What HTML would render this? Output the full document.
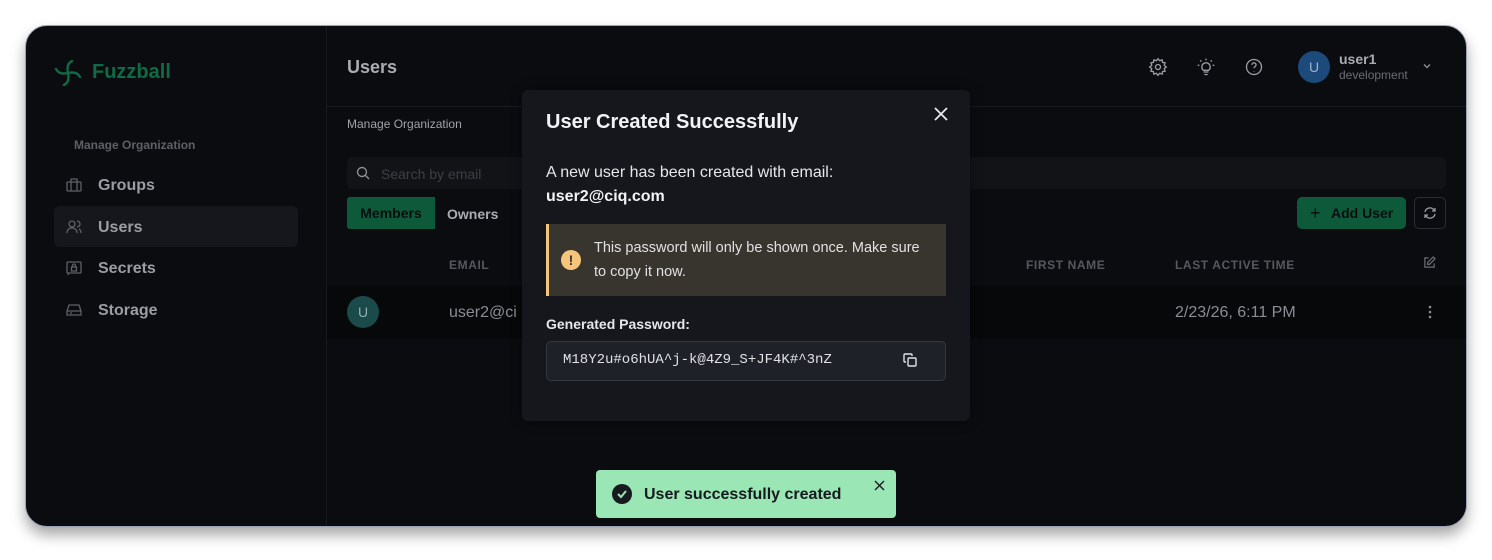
<!DOCTYPE html>
<html><head><meta charset="utf-8"><style>
*{box-sizing:border-box;margin:0;padding:0}
body{width:1492px;height:560px;background:#fff;font-family:"Liberation Sans",sans-serif;position:relative;overflow:hidden}
.win{position:absolute;left:25px;top:25px;width:1442px;height:502px;border-radius:22px;background:#0b0c10;border:1.5px solid #9aa3b5;box-shadow:0 8px 14px rgba(0,0,0,.35);overflow:hidden}
.abs{position:absolute}
.side{left:0;top:0;width:301px;height:100%;border-right:1px solid #181a1f}
.t{position:absolute;white-space:nowrap}
.nav{color:#9a9da3;font-size:16px;font-weight:bold}
.ic{stroke:#5c6067;fill:none;stroke-width:1.3}
</style></head><body>
<div class="win">
 <div class="abs side">
  <svg class="abs" style="left:27px;top:32px" width="30" height="30" viewBox="0 0 30 30" fill="none" stroke="#0f6a45" stroke-width="2.4" stroke-linecap="round">
   <path d="M15 15 Q13 6 19 3"/><path d="M15 15 Q24 13 27 19"/><path d="M15 15 Q17 24 11 27"/><path d="M15 15 Q6 17 3 11"/>
  </svg>
  <div class="t" style="left:66px;top:35px;font-size:20px;font-weight:bold;color:#0f6a45">Fuzzball</div>
  <div class="t" style="left:48px;top:112px;font-size:12px;font-weight:bold;color:#5d6066">Manage Organization</div>
  <div class="abs" style="left:28px;top:180px;width:244px;height:41px;border-radius:6px;background:#15171c"></div>
  <svg class="abs ic" style="left:40px;top:151px" width="16" height="16" viewBox="0 0 16 16"><rect x="1" y="5" width="14" height="9" rx="1"/><path d="M5 5V2h6v3M5 5v9M11 5v9"/></svg>
  <div class="t nav" style="left:72px;top:151px">Groups</div>
  <svg class="abs ic" style="left:40px;top:193px" width="16" height="16" viewBox="0 0 16 16"><circle cx="6" cy="5" r="3"/><path d="M1 14c0-3 2-5 5-5s5 2 5 5M11 2a3 3 0 010 6M13 10c1.5.7 2 2 2 4"/></svg>
  <div class="t nav" style="left:72px;top:193px">Users</div>
  <svg class="abs ic" style="left:40px;top:234px" width="16" height="16" viewBox="0 0 16 16"><rect x="1" y="2" width="14" height="11" rx="1"/><rect x="5.5" y="7" width="5" height="4"/><path d="M6.5 7V5.5a1.5 1.5 0 013 0V7M3 13l-1 2"/></svg>
  <div class="t nav" style="left:72px;top:234px">Secrets</div>
  <svg class="abs ic" style="left:40px;top:276px" width="16" height="16" viewBox="0 0 16 16"><path d="M1 9l2-6h10l2 6v4H1zM1 9h14M4 11h2"/></svg>
  <div class="t nav" style="left:72px;top:276px">Storage</div>
 </div>
 <div class="t" style="left:321px;top:31px;font-size:18px;font-weight:bold;color:#a9acb2">Users</div>
 <div class="abs" style="left:301px;top:80px;right:0;height:1px;background:#181a1f"></div>
 <svg class="abs" style="left:1122px;top:31px" width="20" height="20" viewBox="0 0 24 24" fill="none" stroke="#9a9da3" stroke-width="1.6"><circle cx="12" cy="12" r="3"/><path d="M12 2l2 2.5 3-1 .5 3 3 .5-1 3L22 12l-2.5 2 1 3-3 .5-.5 3-3-1L12 22l-2-2.5-3 1-.5-3-3-.5 1-3L2 12l2.5-2-1-3 3-.5.5-3 3 1z"/></svg>
 <svg class="abs" style="left:1170px;top:31px" width="20" height="20" viewBox="0 0 24 24" fill="none" stroke="#9a9da3" stroke-width="1.6"><path d="M9 18h6M10 21h4M12 7a5 5 0 00-3 9h6a5 5 0 00-3-9zM12 2v2M4 10H2M22 10h-2M5 4l1.5 1.5M19 4l-1.5 1.5"/></svg>
 <svg class="abs" style="left:1218px;top:31px" width="20" height="20" viewBox="0 0 24 24" fill="none" stroke="#9a9da3" stroke-width="1.6"><circle cx="12" cy="12" r="9"/><path d="M9.5 9.5a2.5 2.5 0 015 0c0 2-2.5 2-2.5 4M12 17v.5"/></svg>
 <div class="abs" style="left:1272px;top:25px;width:32px;height:32px;border-radius:50%;background:#1c4a7a;color:#9cb3cc;font-size:14px;text-align:center;line-height:32px">U</div>
 <div class="t" style="left:1313px;top:25px;font-size:14px;font-weight:bold;color:#a9acb2">user1</div>
 <div class="t" style="left:1313px;top:42px;font-size:12px;color:#6a6d73">development</div>
 <svg class="abs" style="left:1395px;top:34px" width="12" height="12" viewBox="0 0 12 12" fill="none" stroke="#8a8d93" stroke-width="1.4"><path d="M3 4.5l3 3 3-3"/></svg>
 <div class="t" style="left:321px;top:91px;font-size:12px;color:#a0a3a9">Manage Organization</div>
 <div class="abs" style="left:321px;top:131px;width:1099px;height:32px;border-radius:6px;background:#121317"></div>
 <svg class="abs" style="left:330px;top:140px" width="14" height="14" viewBox="0 0 14 14" fill="none" stroke="#8a8d93" stroke-width="1.4"><circle cx="6" cy="6" r="4.5"/><path d="M9.5 9.5L13 13"/></svg>
 <div class="t" style="left:355px;top:140px;font-size:14px;color:#3c3f45">Search by email</div>
 <div class="abs" style="left:321px;top:171px;width:88px;height:32px;border-radius:3px 0 0 3px;background:#0d5a3a;color:#0b0c10;font-weight:bold;font-size:14px;text-align:center;line-height:32px">Members</div>
 <div class="t" style="left:421px;top:180px;font-size:14px;font-weight:bold;color:#a9acb2">Owners</div>
 <div class="abs" style="left:1271px;top:171px;width:109px;height:32px;border-radius:5px;background:#0d5a3a;color:#0b0c10;font-weight:bold;font-size:14px;line-height:32px;padding-left:34px">Add User</div>
 <div class="t" style="left:1284px;top:177px;font-size:18px;color:#0b0c10">+</div>
 <div class="abs" style="left:1388px;top:171px;width:32px;height:32px;border-radius:5px;border:1px solid #2a2d33"></div>
 <svg class="abs" style="left:1397px;top:180px" width="14" height="14" viewBox="0 0 14 14" fill="none" stroke="#9a9da3" stroke-width="1.3"><path d="M2 6a5 5 0 019-2l1 1M12 8a5 5 0 01-9 2L2 9M12 2v3H9M2 12V9h3"/></svg>
 <div class="t" style="left:423px;top:232px;font-size:12px;font-weight:bold;color:#55585e;letter-spacing:.6px">EMAIL</div>
 <div class="t" style="left:1000px;top:232px;font-size:12px;font-weight:bold;color:#55585e;letter-spacing:.6px">FIRST NAME</div>
 <div class="t" style="left:1149px;top:232px;font-size:12px;font-weight:bold;color:#55585e;letter-spacing:.6px">LAST ACTIVE TIME</div>
 <svg class="abs" style="left:1397px;top:230px" width="13" height="13" viewBox="0 0 14 14" fill="none" stroke="#6a6d73" stroke-width="1.3"><path d="M6 2H2v10h10V8M11 1l2 2-6 6H5V7z"/></svg>
 <div class="abs" style="left:301px;top:260px;right:0;height:53px;background:#07080a"></div>
 <div class="abs" style="left:321px;top:270px;width:32px;height:32px;border-radius:50%;background:#1b4a4a;color:#8fb0b0;font-size:14px;text-align:center;line-height:32px">U</div>
 <div class="t" style="left:423px;top:278px;font-size:16px;color:#8a8d93">user2@ci</div>
 <div class="t" style="left:1149px;top:278px;font-size:16px;color:#8a8d93">2/23/26, 6:11 PM</div>
 <svg class="abs" style="left:1402px;top:279px" width="4" height="14" viewBox="0 0 4 14" fill="#8a8d93"><circle cx="2" cy="2" r="1.3"/><circle cx="2" cy="7" r="1.3"/><circle cx="2" cy="12" r="1.3"/></svg>

 <!-- modal -->
 <div class="abs" style="left:496px;top:64px;width:448px;height:331px;border-radius:6px;background:#15171c;box-shadow:0 0 12px rgba(0,0,0,.4)">
  <div class="t" style="left:24px;top:21px;font-size:20px;font-weight:bold;color:#f2f3f5">User Created Successfully</div>
  <svg class="abs" style="left:412px;top:17px" width="14" height="14" viewBox="0 0 14 14" stroke="#e8e9eb" stroke-width="1.8"><path d="M1 1l12 12M13 1L1 13"/></svg>
  <div class="t" style="left:24px;top:74px;font-size:16px;color:#e6e7ea">A new user has been created with email:</div>
  <div class="t" style="left:24px;top:98px;font-size:16px;font-weight:bold;color:#f2f3f5">user2@ciq.com</div>
  <div class="abs" style="left:24px;top:134px;width:400px;height:72px;background:#38352e;border-left:3px solid #f6c57c"></div>
  <div class="abs" style="left:39px;top:160px;width:20px;height:20px;border-radius:50%;background:#f6c57c;color:#38352e;font-weight:bold;font-size:14px;text-align:center;line-height:20px">!</div>
  <div class="t" style="left:72px;top:146px;font-size:14.5px;line-height:24px;color:#e0e1e3">This password will only be shown once. Make sure<br>to copy it now.</div>
  <div class="t" style="left:24px;top:226px;font-size:14px;font-weight:bold;color:#e6e7ea">Generated Password:</div>
  <div class="abs" style="left:24px;top:251px;width:400px;height:40px;border-radius:5px;background:#1e2128;border:1px solid #353841"></div>
  <div class="t" style="left:41px;top:262px;font-family:'Liberation Mono',monospace;font-size:14px;color:#e0e1e3">M18Y2u#o6hUA^j-k@4Z9_S+JF4K#^3nZ</div>
  <svg class="abs" style="left:381px;top:263px" width="14" height="14" viewBox="0 0 14 14" fill="none" stroke="#e0e1e3" stroke-width="1.4"><rect x="5" y="5" width="8" height="8" rx="1"/><path d="M9 3V2a1 1 0 00-1-1H2a1 1 0 00-1 1v6a1 1 0 001 1h1"/></svg>
 </div>
 <!-- toast -->
 <div class="abs" style="left:570px;top:444px;width:300px;height:48px;border-radius:4px;background:#9ae6b4">
  <div class="abs" style="left:16px;top:14px;width:20px;height:20px;border-radius:50%;background:#171a1f"></div>
  <svg class="abs" style="left:16px;top:14px" width="20" height="20" viewBox="0 0 20 20" fill="none" stroke="#9ae6b4" stroke-width="2"><path d="M6 10l3 3 5-6"/></svg>
  <div class="t" style="left:48px;top:16px;font-size:16px;font-weight:bold;color:#171a1f">User successfully created</div>
  <svg class="abs" style="left:278px;top:10px" width="11" height="11" viewBox="0 0 11 11" stroke="#171a1f" stroke-width="1.4"><path d="M1 1l9 9M10 1L1 10"/></svg>
 </div>
</div>
</body></html>
